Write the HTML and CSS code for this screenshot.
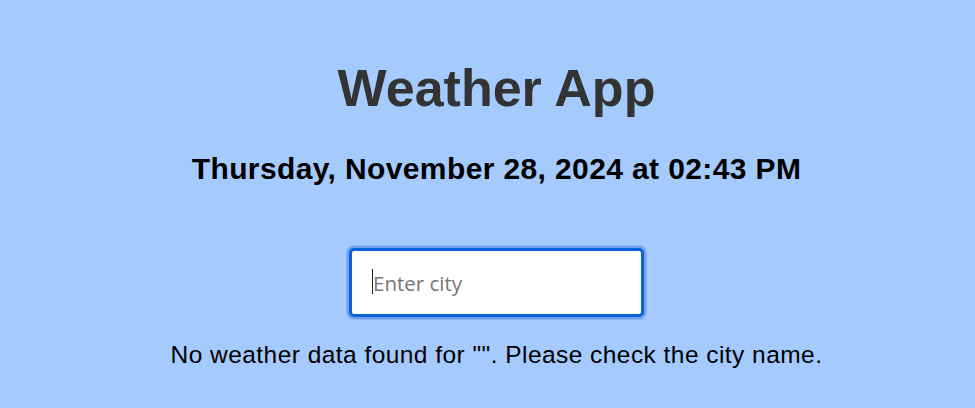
FILE: index.html
```html
<!DOCTYPE html>
<html lang="en">
<head>
<meta charset="utf-8">
<title>Weather App</title>
<link rel="stylesheet" href="styles.css">
</head>
<body>
<div class="app">
  <h1 class="title">Weather App</h1>
  <h2 class="date">Thursday, November 28, 2024 at 02:43 PM</h2>
  <div class="search">
    <input class="city-input" type="text" placeholder="Enter city">
    <span class="caret"></span>
  </div>
  <p class="message">No weather data found for "". Please check the city name.</p>
</div>
</body>
</html>
```
FILE: styles.css
```css
html, body {
  margin: 0;
  padding: 0;
  background: #a4cafe;
  height: 100%;
}
body {
  font-family: "Liberation Sans", Arial, sans-serif;
  overflow: hidden;
}
.app {
  display: flex;
  flex-direction: column;
  align-items: center;
  padding-left: 18px;
  text-align: center;
}
.title {
  margin: 58px 0 0;
  font-size: 52px;
  font-weight: bold;
  line-height: normal;
  color: #333333;
}
.date {
  margin: 34px 0 0;
  font-size: 30px;
  letter-spacing: 0.38px;
  font-weight: bold;
  line-height: normal;
  color: #000;
}
.search {
  position: relative;
  margin-top: 62px;
  width: 295px;
  height: 69px;
}
.city-input {
  box-sizing: border-box;
  width: 100%;
  height: 100%;
  margin: 0;
  padding: 0 10px 0 21px;
  border: 3px solid #0b60dc;
  border-radius: 5px;
  background: #ffffff;
  box-shadow: 0 0 0 2px #6fa0f0, 0 0 0 3px #8db6f6;
  outline: none;
  font-family: "Open Sans", "Noto Sans", sans-serif;
  font-size: 20.5px;
  color: #222;
}
.city-input::placeholder {
  color: #767676;
}
.caret {
  position: absolute;
  left: 23px;
  top: 21px;
  width: 1px;
  height: 25px;
  background: #222;
}
.message {
  margin: 24px 0 0;
  font-size: 24.5px;
  letter-spacing: 0.45px;
  line-height: normal;
  color: #000;
}
```
